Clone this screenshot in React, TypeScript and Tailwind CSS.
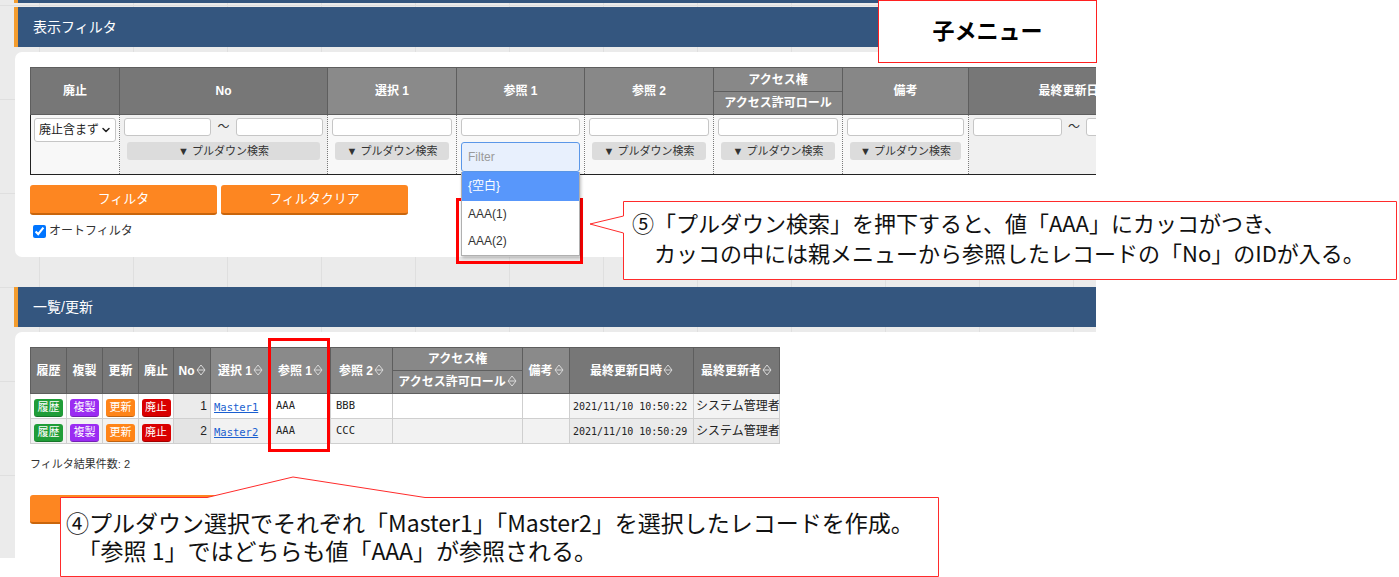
import { ChevronDown } from 'lucide-react'

function SectionHeader({ title, className = '' }: { title: string; className?: string }) {
  return (
    <div
      className={`ml-[14px] flex h-[40px] items-center border-l-4 border-[#f39c2e] bg-[#34567f] pl-[15px] text-[14px] text-white ${className}`}
    >
      {title}
    </div>
  )
}

function Field({ className = '' }: { className?: string }) {
  return <div className={`h-[18px] rounded-[3px] border border-[#c6c6c6] bg-white ${className}`} />
}

function PulldownBtn() {
  return (
    <div className="mx-[3px] mt-[6px] h-[18px] rounded-[3px] bg-[#dcdcdc] text-center text-[11px] leading-[18px] text-[#333]">
      ▼ プルダウン検索
    </div>
  )
}

function SortIcon() {
  return (
    <svg width="10" height="12" viewBox="0 0 10 12" className="ml-[1px] inline-block align-[-1px]">
      <path d="M5 1 L9 6 L5 11 L1 6 Z M1 6 H9" fill="none" stroke="#d9d9d9" strokeWidth="1" />
    </svg>
  )
}

const fth = 'border border-[#5e5e5e] p-0 text-center text-[12px] font-bold text-white whitespace-nowrap'
const ftd = 'h-[60px] border-l border-t border-dotted border-[#7a7a7a] px-[4px] pt-[3px] align-top'

function FilterTable() {
  return (
    <table className="w-[1150px] table-fixed border-collapse border border-[#222]">
      <colgroup>
        <col className="w-[89px]" />
        <col className="w-[208px]" />
        <col className="w-[129px]" />
        <col className="w-[128px]" />
        <col className="w-[129px]" />
        <col className="w-[129px]" />
        <col className="w-[126px]" />
        <col className="w-[212px]" />
      </colgroup>
      <thead>
        <tr className="h-[24px]">
          <th rowSpan={2} className={`${fth} bg-[#777777]`}>廃止</th>
          <th rowSpan={2} className={`${fth} bg-[#777777]`}>No</th>
          <th rowSpan={2} className={`${fth} bg-[#8a8a8a]`}>選択 1</th>
          <th rowSpan={2} className={`${fth} bg-[#888888]`}>参照 1</th>
          <th rowSpan={2} className={`${fth} bg-[#888888]`}>参照 2</th>
          <th className={`${fth} bg-[#888888]`}>アクセス権</th>
          <th rowSpan={2} className={`${fth} bg-[#878787]`}>備考</th>
          <th rowSpan={2} className={`${fth} bg-[#777777]`}>最終更新日時</th>
        </tr>
        <tr className="h-[23px]">
          <th className={`${fth} bg-[#888888]`}>アクセス許可ロール</th>
        </tr>
      </thead>
      <tbody>
        <tr>
          <td className={`${ftd} bg-[#f8f8f8] pl-[3px]`}>
            <div className="flex h-[24px] w-[82px] items-center justify-between whitespace-nowrap rounded-[3px] border border-[#c6c6c6] bg-white pl-[4px] pr-[3px] text-[12px] text-[#222]">
              廃止含まず
              <ChevronDown size={12} strokeWidth={3} className="shrink-0" />
            </div>
          </td>
          <td className={`${ftd} bg-[#f0f0f0]`}>
            <div className="flex items-center">
              <Field className="w-[89px]" />
              <span className="mx-[6px] text-[12px] leading-[18px] text-[#333]">～</span>
              <Field className="w-[89px]" />
            </div>
            <PulldownBtn />
          </td>
          <td className={`${ftd} bg-[#f8f8f8]`}>
            <Field />
            <PulldownBtn />
          </td>
          <td className={`${ftd} relative bg-[#f8f8f8]`}>
            <Field />
            <div className="mt-[6px] flex h-[30px] items-center rounded-[3px] border border-[#5b97e8] bg-[#e8f0fd] pl-[6px] text-[12px] text-[#9a9a9a]">
              Filter
            </div>
            <div className="absolute left-[4px] right-[4px] top-[57px] z-10 border border-t-0 border-[#b0b0b0] bg-white text-[12px] shadow-[1px_2px_3px_rgba(0,0,0,0.25)]">
              <div className="h-[29px] bg-[#5897fb] pl-[6px] leading-[29px] text-white">{'{空白}'}</div>
              <div className="h-[27px] pl-[6px] leading-[27px] text-[#333]">AAA(1)</div>
              <div className="h-[27px] pl-[6px] leading-[27px] text-[#333]">AAA(2)</div>
            </div>
          </td>
          <td className={`${ftd} bg-[#f8f8f8]`}>
            <Field />
            <PulldownBtn />
          </td>
          <td className={`${ftd} bg-[#f8f8f8]`}>
            <Field />
            <PulldownBtn />
          </td>
          <td className={`${ftd} bg-[#f8f8f8]`}>
            <Field />
            <PulldownBtn />
          </td>
          <td className={`${ftd} bg-[#f0f0f0]`}>
            <div className="flex items-center">
              <Field className="w-[89px]" />
              <span className="mx-[6px] text-[12px] leading-[18px] text-[#333]">～</span>
              <Field className="w-[89px]" />
            </div>
          </td>
        </tr>
      </tbody>
    </table>
  )
}

function RowBtn({ label, color }: { label: string; color: string }) {
  return (
    <span
      className={`inline-block h-[18px] w-[29px] rounded-[3px] border-b border-black/25 text-center text-[11px] leading-[17px] text-white ${color}`}
    >
      {label}
    </span>
  )
}

const lth = 'border border-[#5e5e5e] p-0 text-center text-[12px] font-bold text-white whitespace-nowrap'
const ltd = 'h-[25px] border border-[#cfcfcf] p-0 whitespace-nowrap overflow-hidden'
const mono = "font-['DejaVu_Sans_Mono',monospace] text-[10.5px]"

const rows = [
  { no: '1', sel: 'Master1', r1: 'AAA', r2: 'BBB', date: '2021/11/10 10:50:22', bg: 'bg-white', noBg: 'bg-[#ebebeb]', dBg: 'bg-[#f3f3f3]' },
  { no: '2', sel: 'Master2', r1: 'AAA', r2: 'CCC', date: '2021/11/10 10:50:29', bg: 'bg-[#f2f2f2]', noBg: 'bg-[#e4e4e4]', dBg: 'bg-[#eaeaea]' },
]

function ListTable() {
  return (
    <table className="w-[749px] table-fixed border-collapse border border-[#333]">
      <colgroup>
        <col className="w-[36px]" />
        <col className="w-[36px]" />
        <col className="w-[36px]" />
        <col className="w-[35px]" />
        <col className="w-[37px]" />
        <col className="w-[60px]" />
        <col className="w-[60px]" />
        <col className="w-[62px]" />
        <col className="w-[130px]" />
        <col className="w-[47px]" />
        <col className="w-[124px]" />
        <col className="w-[86px]" />
      </colgroup>
      <thead>
        <tr className="h-[23px]">
          <th rowSpan={2} className={`${lth} bg-[#777777]`}>履歴</th>
          <th rowSpan={2} className={`${lth} bg-[#777777]`}>複製</th>
          <th rowSpan={2} className={`${lth} bg-[#777777]`}>更新</th>
          <th rowSpan={2} className={`${lth} bg-[#777777]`}>廃止</th>
          <th rowSpan={2} className={`${lth} bg-[#777777]`}>No<SortIcon /></th>
          <th rowSpan={2} className={`${lth} bg-[#8a8a8a]`}>選択 1<SortIcon /></th>
          <th rowSpan={2} className={`${lth} bg-[#8a8a8a]`}>参照 1<SortIcon /></th>
          <th rowSpan={2} className={`${lth} bg-[#888888]`}>参照 2<SortIcon /></th>
          <th className={`${lth} bg-[#888888]`}>アクセス権</th>
          <th rowSpan={2} className={`${lth} bg-[#8a8a8a]`}>備考<SortIcon /></th>
          <th rowSpan={2} className={`${lth} bg-[#777777]`}>最終更新日時<SortIcon /></th>
          <th rowSpan={2} className={`${lth} bg-[#777777]`}>最終更新者<SortIcon /></th>
        </tr>
        <tr className="h-[23px]">
          <th className={`${lth} bg-[#888888]`}>アクセス許可ロール<SortIcon /></th>
        </tr>
      </thead>
      <tbody>
        {rows.map((r) => (
          <tr key={r.no} className={r.bg}>
            <td className={`${ltd} text-center`}><RowBtn label="履歴" color="bg-[#1f9d38]" /></td>
            <td className={`${ltd} text-center`}><RowBtn label="複製" color="bg-[#9b2cf2]" /></td>
            <td className={`${ltd} text-center`}><RowBtn label="更新" color="bg-[#ff8418]" /></td>
            <td className={`${ltd} text-center`}><RowBtn label="廃止" color="bg-[#d90000]" /></td>
            <td className={`${ltd} ${r.noBg} pr-[3px] text-right text-[12px] text-[#222]`}>{r.no}</td>
            <td className={`${ltd} pl-[3px]`}>
              <span className={`${mono} text-[#1a5fd0] underline`}>{r.sel}</span>
            </td>
            <td className={`${ltd} pl-[5px] ${mono} text-[#222]`}>{r.r1}</td>
            <td className={`${ltd} pl-[5px] ${mono} text-[#222]`}>{r.r2}</td>
            <td className={ltd} />
            <td className={ltd} />
            <td className={`${ltd} ${r.dBg} border-l-[#999] border-l-dotted pl-[3px] font-['DejaVu_Sans_Mono',monospace] text-[10px] text-[#222]`}>{r.date}</td>
            <td className={`${ltd} ${r.dBg} pl-[2px] text-[12px] text-[#222]`}>システム管理者</td>
          </tr>
        ))}
      </tbody>
    </table>
  )
}

export default function App() {
  return (
    <div className="relative h-[577px] w-[1399px] overflow-hidden bg-white font-['Liberation_Sans','Noto_Sans_CJK_JP',sans-serif]">
      <div className="h-[558px] w-[1096px] overflow-hidden bg-[#ebebeb] bg-[linear-gradient(to_right,#dfdfdf_1px,transparent_1px),linear-gradient(to_bottom,#dfdfdf_1px,transparent_1px)] bg-[size:94px_94px] bg-[position:39px_5px]">
        <div className="ml-[14px] h-[3px] border-l-4 border-[#f39c2e] bg-[#34567f]" />
        <SectionHeader title="表示フィルタ" className="mt-[4px]" />
        <div className="ml-[15px] mt-[5px] h-[205px] rounded-l-[7px] bg-white pl-[15px] pt-[15px]">
          <FilterTable />
          <div className="mt-[10px] flex gap-[4px]">
            <div className="flex h-[30px] w-[187px] items-center justify-center rounded-[3px] border-b-2 border-[#c9650c] bg-[#fd8621] text-[13px] text-white">
              フィルタ
            </div>
            <div className="flex h-[30px] w-[187px] items-center justify-center rounded-[3px] border-b-2 border-[#c9650c] bg-[#fd8621] text-[13px] text-white">
              フィルタクリア
            </div>
          </div>
          <div className="mt-[7px] flex items-center pl-[3px] text-[12px] text-[#333]">
            <input type="checkbox" defaultChecked className="m-0 h-[13px] w-[13px]" />
            <span className="ml-[3px]">オートフィルタ</span>
          </div>
        </div>
        <SectionHeader title="一覧/更新" className="mt-[30px]" />
        <div className="ml-[15px] mt-[5px] h-[300px] rounded-tl-[7px] bg-white pl-[15px] pt-[15px]">
          <ListTable />
          <div className="mt-[13px] text-[11px] leading-[14px] text-[#333]">フィルタ結果件数: 2</div>
          <div className="mt-[24px] h-[29px] w-[187px] rounded-[3px] border-b-2 border-[#c9650c] bg-[#fd8621]" />
        </div>
      </div>

      <div className="absolute left-[878px] top-0 flex h-[63px] w-[219px] items-center justify-center border border-[#ff2020] bg-white text-[22px] font-bold text-black">
        子メニュー
      </div>

      <div className="absolute left-[456px] top-[198px] h-[66px] w-[127px] border-[3px] border-[#ff0000]" />
      <div className="absolute left-[268px] top-[338px] h-[114px] w-[62px] border-[3px] border-[#ff0000]" />

      <svg className="pointer-events-none absolute left-0 top-0" width="1399" height="577">
        <polygon
          points="623.5,201.5 1396.5,201.5 1396.5,279.5 623.5,279.5 623.5,233 590,224 623.5,216"
          fill="white"
          stroke="#ff2b2b"
          strokeWidth="1"
        />
        <polygon
          points="60.5,497.5 207,497.5 293,477 425,497.5 938.5,497.5 938.5,576.5 60.5,576.5"
          fill="white"
          stroke="#ff2b2b"
          strokeWidth="1"
        />
      </svg>

      <div className="absolute left-[632px] top-[207px] whitespace-nowrap font-['Noto_Sans_CJK_JP',sans-serif] text-[22px] leading-[30px] text-[#111]">
        <div>⑤「プルダウン検索」を押下すると、値「AAA」にカッコがつき、</div>
        <div>　カッコの中には親メニューから参照したレコードの「No」のIDが入る。</div>
      </div>

      <div className="absolute left-[66px] top-[508px] whitespace-nowrap font-['Noto_Sans_CJK_JP',sans-serif] text-[23px] leading-[28px] text-[#111]">
        <div>④プルダウン選択でそれぞれ「Master1」「Master2」を選択したレコードを作成。</div>
        <div>　「参照 1」ではどちらも値「AAA」が参照される。</div>
      </div>
    </div>
  )
}
